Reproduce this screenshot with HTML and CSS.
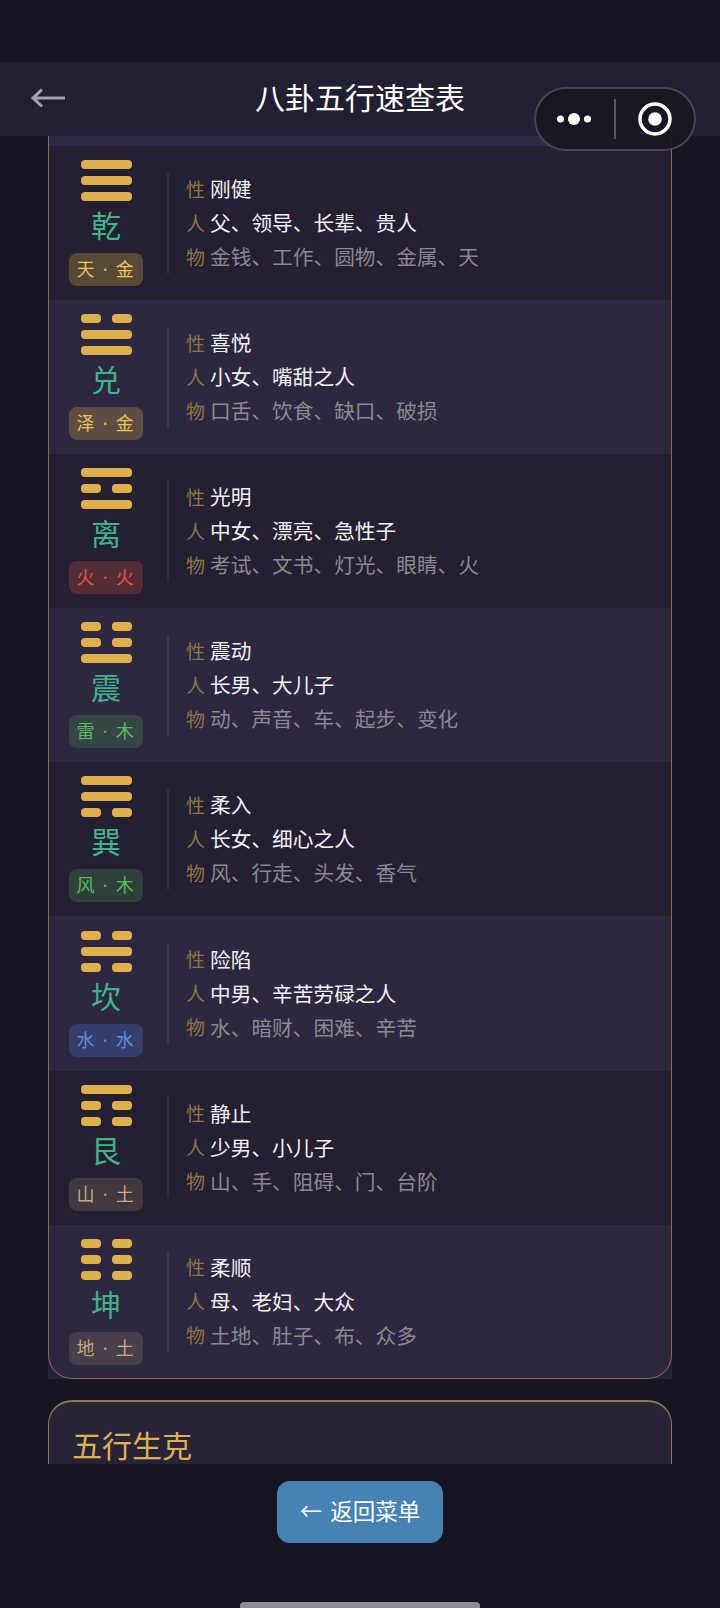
FILE: index.html
```html
<!DOCTYPE html>
<html lang="zh">
<head>
    <meta charset="UTF-8">
    <meta name="viewport" content="width=device-width, initial-scale=1.0">
    <title>八卦五行速查表</title>
    <link rel="stylesheet" href="styles.css">
</head>
<body>

<div class="page">
    <div class="status"></div>

    <div class="nav">
        <svg class="nav-back" width="36" height="20" viewBox="0 0 36 20">
            <path d="M35 10H3M12 1.500L3 10l9 8.500" fill="none" stroke="#a5a3ab" stroke-width="3"/>
        </svg>
        <h1>八卦五行速查表</h1>
    </div>

    <div class="capsule">
        <div class="capsule-side capsule-more">
            <svg width="40" height="14" viewBox="0 0 40 14">
                <circle cx="6.500" cy="7" r="3.500" fill="#fff"/>
                <circle cx="20" cy="7" r="6" fill="#fff"/>
                <circle cx="33.500" cy="7" r="3.500" fill="#fff"/>
            </svg>
        </div>
        <div class="capsule-line"></div>
        <div class="capsule-side">
            <svg width="34" height="34" viewBox="0 0 34 34">
                <circle cx="17" cy="17" r="15" fill="none" stroke="#fff" stroke-width="3.500"/>
                <circle cx="17" cy="17" r="6.800" fill="#fff"/>
            </svg>
        </div>
    </div>

    <div class="scroll">
        <div class="card">
            <div class="card-strip"></div>

            <div class="row">
                <div class="gua">
                    <div class="bars">
                        <div class="bar"></div>
                        <div class="bar"></div>
                        <div class="bar"></div>
                    </div>
                    <div class="gua-name">乾</div>
                    <div class="tag tag-metal">天 · 金</div>
                </div>
                <div class="info">
                    <div class="line"><span class="key">性</span><span class="val">刚健</span></div>
                    <div class="line"><span class="key">人</span><span class="val">父、领导、长辈、贵人</span></div>
                    <div class="line"><span class="key">物</span><span class="val val-dim">金钱、工作、圆物、金属、天</span></div>
                </div>
            </div>

            <div class="row">
                <div class="gua">
                    <div class="bars">
                        <div class="bar-split"><div class="bar"></div><div class="bar"></div></div>
                        <div class="bar"></div>
                        <div class="bar"></div>
                    </div>
                    <div class="gua-name">兑</div>
                    <div class="tag tag-metal">泽 · 金</div>
                </div>
                <div class="info">
                    <div class="line"><span class="key">性</span><span class="val">喜悦</span></div>
                    <div class="line"><span class="key">人</span><span class="val">小女、嘴甜之人</span></div>
                    <div class="line"><span class="key">物</span><span class="val val-dim">口舌、饮食、缺口、破损</span></div>
                </div>
            </div>

            <div class="row">
                <div class="gua">
                    <div class="bars">
                        <div class="bar"></div>
                        <div class="bar-split"><div class="bar"></div><div class="bar"></div></div>
                        <div class="bar"></div>
                    </div>
                    <div class="gua-name">离</div>
                    <div class="tag tag-fire">火 · 火</div>
                </div>
                <div class="info">
                    <div class="line"><span class="key">性</span><span class="val">光明</span></div>
                    <div class="line"><span class="key">人</span><span class="val">中女、漂亮、急性子</span></div>
                    <div class="line"><span class="key">物</span><span class="val val-dim">考试、文书、灯光、眼睛、火</span></div>
                </div>
            </div>

            <div class="row">
                <div class="gua">
                    <div class="bars">
                        <div class="bar-split"><div class="bar"></div><div class="bar"></div></div>
                        <div class="bar-split"><div class="bar"></div><div class="bar"></div></div>
                        <div class="bar"></div>
                    </div>
                    <div class="gua-name">震</div>
                    <div class="tag tag-wood">雷 · 木</div>
                </div>
                <div class="info">
                    <div class="line"><span class="key">性</span><span class="val">震动</span></div>
                    <div class="line"><span class="key">人</span><span class="val">长男、大儿子</span></div>
                    <div class="line"><span class="key">物</span><span class="val val-dim">动、声音、车、起步、变化</span></div>
                </div>
            </div>

            <div class="row">
                <div class="gua">
                    <div class="bars">
                        <div class="bar"></div>
                        <div class="bar"></div>
                        <div class="bar-split"><div class="bar"></div><div class="bar"></div></div>
                    </div>
                    <div class="gua-name">巽</div>
                    <div class="tag tag-wood">风 · 木</div>
                </div>
                <div class="info">
                    <div class="line"><span class="key">性</span><span class="val">柔入</span></div>
                    <div class="line"><span class="key">人</span><span class="val">长女、细心之人</span></div>
                    <div class="line"><span class="key">物</span><span class="val val-dim">风、行走、头发、香气</span></div>
                </div>
            </div>

            <div class="row">
                <div class="gua">
                    <div class="bars">
                        <div class="bar-split"><div class="bar"></div><div class="bar"></div></div>
                        <div class="bar"></div>
                        <div class="bar-split"><div class="bar"></div><div class="bar"></div></div>
                    </div>
                    <div class="gua-name">坎</div>
                    <div class="tag tag-water">水 · 水</div>
                </div>
                <div class="info">
                    <div class="line"><span class="key">性</span><span class="val">险陷</span></div>
                    <div class="line"><span class="key">人</span><span class="val">中男、辛苦劳碌之人</span></div>
                    <div class="line"><span class="key">物</span><span class="val val-dim">水、暗财、困难、辛苦</span></div>
                </div>
            </div>

            <div class="row">
                <div class="gua">
                    <div class="bars">
                        <div class="bar"></div>
                        <div class="bar-split"><div class="bar"></div><div class="bar"></div></div>
                        <div class="bar-split"><div class="bar"></div><div class="bar"></div></div>
                    </div>
                    <div class="gua-name">艮</div>
                    <div class="tag tag-earth">山 · 土</div>
                </div>
                <div class="info">
                    <div class="line"><span class="key">性</span><span class="val">静止</span></div>
                    <div class="line"><span class="key">人</span><span class="val">少男、小儿子</span></div>
                    <div class="line"><span class="key">物</span><span class="val val-dim">山、手、阻碍、门、台阶</span></div>
                </div>
            </div>

            <div class="row">
                <div class="gua">
                    <div class="bars">
                        <div class="bar-split"><div class="bar"></div><div class="bar"></div></div>
                        <div class="bar-split"><div class="bar"></div><div class="bar"></div></div>
                        <div class="bar-split"><div class="bar"></div><div class="bar"></div></div>
                    </div>
                    <div class="gua-name">坤</div>
                    <div class="tag tag-earth">地 · 土</div>
                </div>
                <div class="info">
                    <div class="line"><span class="key">性</span><span class="val">柔顺</span></div>
                    <div class="line"><span class="key">人</span><span class="val">母、老妇、大众</span></div>
                    <div class="line"><span class="key">物</span><span class="val val-dim">土地、肚子、布、众多</span></div>
                </div>
            </div>
        </div>

        <div class="card-next">
            <h2>五行生克</h2>
        </div>
    </div>

    <div class="footer">
        <button class="back-btn">← 返回菜单</button>
    </div>

    <div class="home-bar"></div>
</div>

</body>
</html>
```

FILE: styles.css
```css
*{
    box-sizing:border-box;
}
body{
    margin:0;
    padding:0;
    background-color:#181522;
    font-family:"Noto Sans CJK SC", "Noto Sans", sans-serif;
}
.page{
    position:relative;
    width:720px;
    height:1608px;
    display:flex;
    flex-direction:column;
    overflow:hidden;
}
.status{
    height:62px;
    flex:none;
}
.nav{
    height:74px;
    flex:none;
    background-color:#231f33;
    display:flex;
    align-items:center;
    justify-content:center;
    position:relative;
}
.nav h1{
    margin:0 0 6px;
    font-size:30px;
    font-weight:400;
    color:#fff;
}
.nav-back{
    position:absolute;
    left:30px;
    top:26px;
}
.capsule{
    position:absolute;
    left:534px;
    top:87px;
    width:162px;
    height:64px;
    border:2px solid rgba(255,255,255,0.2);
    border-radius:32px;
    background-color:rgba(24,21,32,0.9);
    display:flex;
    align-items:center;
    z-index:2;
}
.capsule-side{
    flex:1;
    display:flex;
    align-items:center;
    justify-content:center;
}
.capsule-more{
    flex:none;
    width:78px;
    padding-right:3px;
}
.capsule-line{
    width:2px;
    height:40px;
    background-color:rgba(255,255,255,0.28);
}
.scroll{
    height:1328px;
    flex:none;
    overflow:hidden;
    padding:0 48px;
}
.card{
    position:relative;
    background-color:#272336;
}
/* border sits on top of the rows, their square corners poke out past it */
.card::after{
    content:"";
    position:absolute;
    top:-30px;
    left:0;
    right:0;
    bottom:0;
    border:1px solid #80704f;
    border-radius:24px;
    pointer-events:none;
}
.card-strip{
    height:10px;
    background-color:#322845;
}
.row{
    height:154.100px;
    padding:14px 0 14px 21px;
    display:flex;
    align-items:center;
    background-color:#2d283f;
}
.row:nth-child(even){
    background-color:#242031;
}
.row:last-child{
    border-radius:0 0 24px 24px;
}
.gua{
    width:74px;
    flex:none;
    display:flex;
    flex-direction:column;
    align-items:center;
}
.bars{
    width:51px;
    display:flex;
    flex-direction:column;
    gap:7px;
}
.bar{
    height:9px;
    border-radius:4px;
    background-color:#e0b04c;
}
.bar-split{
    display:flex;
    justify-content:space-between;
}
.bar-split .bar{
    width:20px;
}
.gua-name{
    margin-top:4px;
    height:38px;
    font-size:30px;
    line-height:38px;
    color:#3fb38c;
}
.tag{
    margin-top:10px;
    width:74px;
    height:33px;
    border-radius:8px;
    font-family:"Noto Sans", "Noto Sans CJK SC", sans-serif;
    font-size:18px;
    line-height:33px;
    letter-spacing:1.800px;
    text-align:center;
}
.tag-metal{
    color:#eac457;
    background-color:rgba(224,176,76,0.28);
}
.tag-fire{
    color:#e2504c;
    background-color:rgba(224,80,70,0.26);
}
.tag-wood{
    color:#55bb5c;
    background-color:rgba(80,180,90,0.22);
}
.tag-water{
    color:#5b8fe6;
    background-color:rgba(74,120,220,0.28);
}
.tag-earth{
    color:#c7a880;
    background-color:rgba(200,170,130,0.18);
}
.info{
    margin-left:24px;
    height:101px;
    padding:0 0 2px 17px;
    border-left:2px solid rgba(255,255,255,0.07);
    display:flex;
    flex-direction:column;
    justify-content:center;
    gap:4px;
}
.line{
    display:flex;
    align-items:center;
    height:30px;
}
.key{
    width:24px;
    flex:none;
    font-size:19px;
    color:#8f7545;
}
.val{
    font-size:20.700px;
    color:#f2f1f4;
}
.val-dim{
    color:#8a8891;
}
.card-next{
    margin-top:21px;
    height:200px;
    border:1px solid #8a7850;
    border-top-width:2px;
    border-radius:24px;
    background-color:#282437;
    padding:24px 23px;
}
.card-next h2{
    margin:0;
    font-size:30px;
    font-weight:400;
    line-height:36px;
    color:#e0b04c;
}
.footer{
    flex:1;
    padding-top:17px;
    display:flex;
    justify-content:center;
    align-items:flex-start;
}
.back-btn{
    width:166px;
    height:62px;
    padding:0 0 4px;
    border:none;
    border-radius:13px;
    background-color:#4682b4;
    color:#fff;
    font-family:inherit;
    font-size:22.500px;
    word-spacing:3px;
    cursor:pointer;
}
.home-bar{
    position:absolute;
    left:240px;
    bottom:0;
    width:240px;
    height:6px;
    border-radius:4px 4px 0 0;
    background-color:#8e8c96;
}
```
